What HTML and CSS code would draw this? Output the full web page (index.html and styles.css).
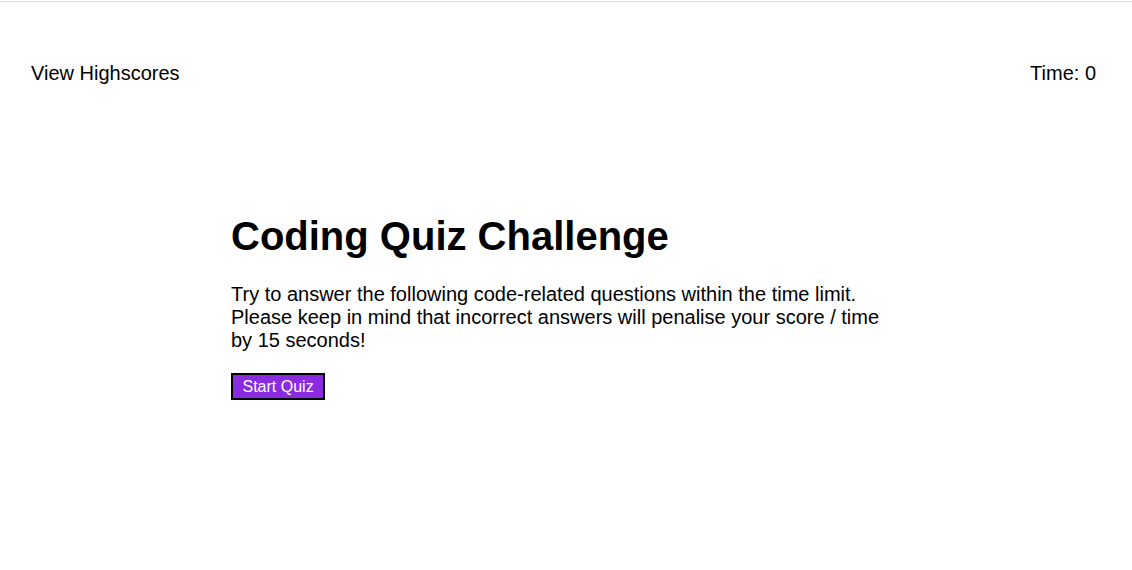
FILE: index.html
```html
<!DOCTYPE html>
<html lang="en">
<head>
<meta charset="utf-8">
<title>Coding Quiz Challenge</title>
<link rel="stylesheet" href="styles.css">
</head>
<body>
<div class="topline"></div>
<header class="header">
  <a class="highscores" href="#">View Highscores</a>
  <div class="timer">Time: <span>0</span></div>
</header>
<main class="quiz">
  <h1 class="title">Coding Quiz Challenge</h1>
  <p class="intro">Try to answer the following code-related questions within the time limit. Please keep in mind that incorrect answers will penalise your score / time by 15 seconds!</p>
  <button class="start-btn" type="button">Start Quiz</button>
</main>
</body>
</html>
```
FILE: styles.css
```css
html, body {
  margin: 0;
  padding: 0;
  background: #fff;
}
body {
  font-family: "Liberation Sans", Arial, sans-serif;
  color: #000;
}
.topline {
  margin-top: 1px;
  height: 1px;
  background: #dcdcdc;
}
.header {
  display: flex;
  justify-content: space-between;
  align-items: center;
  padding: 60px 36px 0 31px;
  font-size: 20px;
  line-height: 23px;
}
.highscores {
  color: #000;
  text-decoration: none;
}
.quiz {
  width: 670px;
  margin: 128px auto 0;
}
.title {
  margin: 0;
  font-size: 40px;
  line-height: 46px;
  font-weight: bold;
}
.intro {
  margin: 24px 0 0;
  font-size: 20px;
  line-height: 23px;
}
.start-btn {
  margin-top: 21px;
  font-family: "Liberation Sans", Arial, sans-serif;
  font-size: 16px;
  line-height: 19px;
  padding: 2px 9.5px;
  background: #8a2be2;
  color: #fff;
  border: 2px solid #000;
  border-radius: 0;
  cursor: pointer;
}
```
